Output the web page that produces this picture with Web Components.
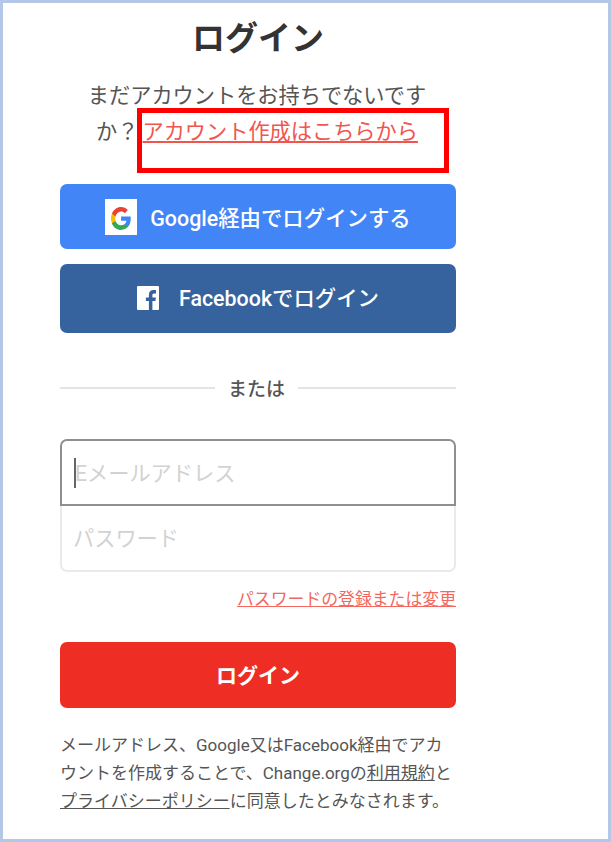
<!DOCTYPE html>
<html lang="ja">
<head>
<meta charset="utf-8">
<title>ログイン</title>
<style>
html, body { margin: 0; padding: 0; background: #fff; }
body { font-family: Roboto, "Noto Sans CJK JP", sans-serif; }
</style>
</head>
<body>
<login-page>
  <login-header>
    <span slot="title">ログイン</span>
    まだアカウントをお持ちでないです<br>か？<a href="#">アカウント作成はこちらから</a>
  </login-header>
  <social-button kind="google">Google経由でログインする</social-button>
  <social-button kind="facebook">Facebookでログイン</social-button>
  <or-divider>または</or-divider>
  <login-fields></login-fields>
  <submit-button>ログイン</submit-button>
  <legal-note></legal-note>
</login-page>
<script>
class LoginPage extends HTMLElement {
    constructor() {
        super();
        this.attachShadow({ mode: 'open' });
    }
    connectedCallback() {
        this.shadowRoot.innerHTML = `
            <style>
                :host {
                    display: block;
                    box-sizing: border-box;
                    width: 611px;
                    height: 842px;
                    border: 3px solid #b4c7e7;
                    padding: 0 152px 0 57px;
                    overflow: hidden;
                    background: #fff;
                    color: #333;
                }
            </style>
            <slot></slot>
        `;
    }
}

class LoginHeader extends HTMLElement {
    constructor() {
        super();
        this.attachShadow({ mode: 'open' });
    }
    connectedCallback() {
        this.shadowRoot.innerHTML = `
            <style>
                :host {
                    display: block;
                    position: relative;
                    height: 181px;
                    text-align: center;
                }
                h1 {
                    margin: 0;
                    padding-top: 13px;
                    height: 75px;
                    box-sizing: border-box;
                    font-size: 33px;
                    line-height: 46px;
                    font-weight: 700;
                    color: #333;
                }
                p {
                    margin: 0 -6px 0 -8px;
                    font-size: 21.2px;
                    line-height: 36px;
                    color: #555;
                }
                ::slotted(a) { color: #f0564f; margin-left: 4px; }
                .mark {
                    position: absolute;
                    left: 77px;
                    top: 105px;
                    width: 302px;
                    height: 55px;
                    border: 5px solid #f00;
                }
            </style>
            <h1><slot name="title"></slot></h1>
            <p><slot></slot></p>
            <div class="mark"></div>
        `;
    }
}

class SocialButton extends HTMLElement {
    constructor() {
        super();
        this.attachShadow({ mode: 'open' });
    }
    connectedCallback() {
        const google = this.getAttribute('kind') === 'google';
        const icon = google
            ? `<svg class="g" width="32" height="36" viewBox="0 0 32 36">
                 <rect width="32" height="36" fill="#fff"/>
                 <g transform="translate(5 7) scale(.46 .52)">
                   <path fill="#4285f4" d="M45.1 24.5c0-1.6-.1-3.1-.4-4.5H24v8.5h11.8c-.5 2.7-2.1 5-4.4 6.6v5.5h7.2c4.2-3.9 6.5-9.6 6.5-16.1z"/>
                   <path fill="#34a853" d="M24 46c5.900 0 10.900-2 14.600-5.400l-7.200-5.500c-2 1.300-4.500 2.100-7.400 2.100-5.700 0-10.500-3.800-12.300-9H4.300v5.700C8 41.200 15.400 46 24 46z"/>
                   <path fill="#fbbc05" d="M11.700 28.700c-.4-1.300-.7-2.800-.7-4.200s.3-2.900.7-4.200v-5.700H4.300C2.800 17.600 2 20.700 2 24s.8 6.400 2.300 9.400z"/>
                   <path fill="#ea4335" d="M24 10.800c3.200 0 6.100 1.100 8.400 3.300l6.300-6.300C34.900 4.200 29.900 2 24 2 15.400 2 8 6.900 4.300 14.600l7.400 5.700c1.800-5.200 6.600-9.500 12.300-9.500z"/>
                 </g>
               </svg>`
            : `<svg class="f" width="22" height="24" viewBox="0 0 22 24">
                 <path fill="#fff" d="M1 0h20a1 1 0 0 1 1 1v22a1 1 0 0 1-1 1h-5.600v-9h3l.5-3.600h-3.500V9.200c0-1 .3-1.800 1.800-1.800h1.800V4.200c-.4 0-1.400-.1-2.600-.1-2.700 0-4.500 1.600-4.500 4.600v2.700h-3V15h3v9H1a1 1 0 0 1-1-1V1a1 1 0 0 1 1-1z"/>
               </svg>`;
        this.shadowRoot.innerHTML = `
            <style>
                :host {
                    display: flex;
                    align-items: center;
                    justify-content: center;
                    box-sizing: border-box;
                    gap: ${google ? 13 : 20}px;
                    height: ${google ? 65 : 69}px;
                    padding-bottom: ${google ? 0 : 2}px;
                    margin-bottom: ${google ? 15 : 0}px;
                    border-radius: 7px;
                    background: ${google ? '#4285f6' : '#36639e'};
                    color: #fff;
                    font-size: 21.4px;
                    font-weight: 500;
                }
                svg { flex: none; display: block; }
                span { position: relative; top: ${google ? 0 : -1}px; }
            </style>
            ${icon}
            <span><slot></slot></span>
        `;
    }
}

class OrDivider extends HTMLElement {
    constructor() {
        super();
        this.attachShadow({ mode: 'open' });
    }
    connectedCallback() {
        this.shadowRoot.innerHTML = `
            <style>
                :host {
                    display: flex;
                    align-items: center;
                    gap: 13px;
                    height: 30px;
                    margin: 40px 0 36px;
                    color: #555;
                    font-size: 19px;
                    font-weight: 500;
                }
                i { height: 2px; background: #e4e4e4; }
                i:first-of-type { flex: 0 0 155px; }
                i:last-of-type { flex: 1; }
                span { position: relative; top: -1px; }
            </style>
            <i></i><span><slot></slot></span><i></i>
        `;
    }
}

class LoginFields extends HTMLElement {
    constructor() {
        super();
        this.attachShadow({ mode: 'open' });
    }
    connectedCallback() {
        this.shadowRoot.innerHTML = `
            <style>
                :host { display: block; font-size: 21.2px; color: #d2d2d2; }
                .row {
                    box-sizing: border-box;
                    display: flex;
                    align-items: center;
                    padding-left: 13px;
                }
                .email {
                    height: 67px;
                    padding-bottom: 2px;
                    border: 2px solid #8f8f8f;
                    border-radius: 7px 7px 0 0;
                    position: relative;
                }
                .email::before {
                    content: "";
                    position: absolute;
                    left: 12px;
                    top: 17px;
                    width: 2px;
                    height: 30px;
                    background: #666;
                }
                .password {
                    height: 66px;
                    padding-bottom: 3px;
                    border: 2px solid #eaeaea;
                    border-top: 0;
                    border-radius: 0 0 7px 7px;
                    padding-left: 11px;
                }
                .forgot {
                    display: block;
                    margin-top: 15px;
                    height: 26px;
                    text-align: right;
                    font-size: 16.85px;
                    line-height: 24px;
                    color: #f4675f;
                    text-decoration: underline;
                }
            </style>
            <div class="row email">Eメールアドレス</div>
            <div class="row password">パスワード</div>
            <a class="forgot">パスワードの登録または変更</a>
        `;
    }
}

class SubmitButton extends HTMLElement {
    constructor() {
        super();
        this.attachShadow({ mode: 'open' });
    }
    connectedCallback() {
        this.shadowRoot.innerHTML = `
            <style>
                :host {
                    display: flex;
                    align-items: center;
                    justify-content: center;
                    box-sizing: border-box;
                    height: 66px;
                    padding-bottom: 2px;
                    margin-top: 29px;
                    border-radius: 7px;
                    background: #ee2e24;
                    color: #fff;
                    font-size: 21px;
                    font-weight: 700;
                }
            </style>
            <slot></slot>
        `;
    }
}

class LegalNote extends HTMLElement {
    constructor() {
        super();
        this.attachShadow({ mode: 'open' });
    }
    connectedCallback() {
        this.shadowRoot.innerHTML = `
            <style>
                :host {
                    display: block;
                    margin-top: 23px;
                    font-size: 17px;
                    line-height: 28px;
                    color: #555;
                    white-space: nowrap;
                }
                a { color: #555; text-decoration: underline; }
            </style>
            メールアドレス、Google又はFacebook経由でアカ<br>ウントを作成することで、Change.orgの<a>利用規約</a>と<br><a>プライバシーポリシー</a>に同意したとみなされます。
        `;
    }
}

customElements.define('login-page', LoginPage);
customElements.define('login-header', LoginHeader);
customElements.define('social-button', SocialButton);
customElements.define('or-divider', OrDivider);
customElements.define('login-fields', LoginFields);
customElements.define('submit-button', SubmitButton);
customElements.define('legal-note', LegalNote);
</script>
</body>
</html>
